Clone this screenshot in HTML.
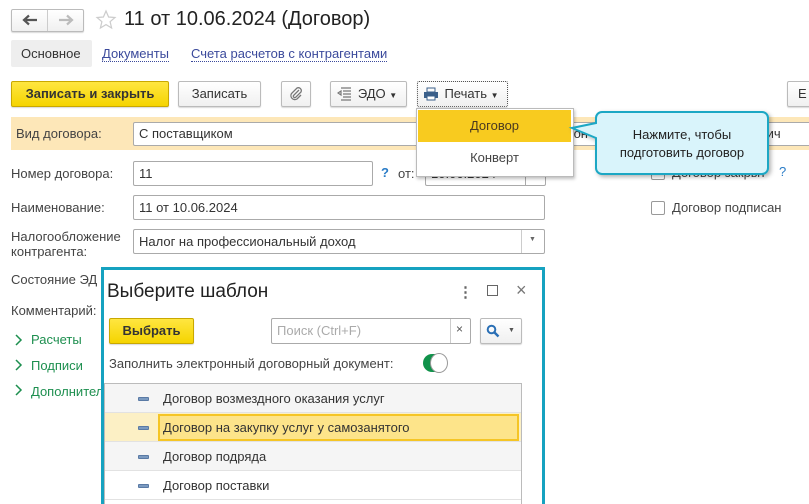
<!DOCTYPE html>
<html><head><meta charset="utf-8"><style>
*{box-sizing:border-box;margin:0;padding:0}
html{width:809px;height:504px;overflow:hidden}
body{width:809px;height:504px;overflow:hidden;background:#fff;font-family:"Liberation Sans",Arial,sans-serif;font-size:13px;color:#333;position:relative}
.a{position:absolute;white-space:nowrap}
.btn{position:absolute;border:1px solid #bbb;border-radius:2px;background:linear-gradient(#fff,#f0f0f0);box-shadow:0 1px 1px rgba(0,0,0,.15);text-align:center;color:#333}
.inp{position:absolute;border:1px solid #aaa;border-radius:2px;background:#fff;padding-left:5px;color:#333}
.lbl{position:absolute;color:#444;white-space:nowrap}
.link{color:#3b4a9c;border-bottom:1px dotted #3b4a9c}
.chk{position:absolute;width:14px;height:14px;border:1px solid #999;border-radius:2px;background:#fff}
.grn{position:absolute;color:#1d8f4f;white-space:nowrap}
.row{position:absolute;left:3px;width:416px;height:29px;border-bottom:1px solid #e2e2e2}
.row .d{position:absolute;left:33px;top:13px;width:11px;height:4px;background:#7b9ac0;border:1px solid #5a7aa5;border-radius:1px}
.row .t{position:absolute;left:58px;top:7px;color:#333;font-size:13px}
</style></head><body>

<div class="btn" style="left:11px;top:9px;width:73px;height:23px"></div>
<div class="a" style="left:47px;top:10px;width:1px;height:21px;background:#ccc"></div>
<svg class="a" style="left:22px;top:14px" width="16" height="12" viewBox="0 0 16 12"><path d="M15 6H4M7 1.5L2 6l5 4.5" fill="none" stroke="#555" stroke-width="2.2"/></svg>
<svg class="a" style="left:58px;top:14px" width="16" height="12" viewBox="0 0 16 12"><path d="M1 6h11M9 1.5L14 6l-5 4.5" fill="none" stroke="#bbb" stroke-width="2.2"/></svg>
<svg class="a" style="left:95px;top:9px" width="22" height="22" viewBox="0 0 22 22"><path d="M11 2l2.6 6 6.4.5-4.9 4.2 1.5 6.3L11 15.6 5.4 19l1.5-6.3L2 8.5 8.4 8z" fill="none" stroke="#ccc" stroke-width="1.2"/></svg>
<div class="a" style="left:124px;top:8px;font-size:20px;color:#222">11 от 10.06.2024 (Договор)</div>

<div class="a" style="left:11px;top:40px;width:81px;height:27px;background:#eee;border-radius:2px"></div>
<div class="a" style="left:21px;top:46px;color:#333">Основное</div>
<div class="a link" style="left:102px;top:46px">Документы</div>
<div class="a link" style="left:191px;top:46px">Счета расчетов с контрагентами</div>

<div class="btn" style="left:11px;top:81px;width:158px;height:26px;background:linear-gradient(#ffe640,#f5d400);border-color:#c9a800;font-weight:bold;line-height:24px;color:#333">Записать и закрыть</div>
<div class="btn" style="left:178px;top:81px;width:83px;height:26px;line-height:24px">Записать</div>
<div class="btn" style="left:281px;top:81px;width:30px;height:26px"></div>
<svg class="a" style="left:288px;top:86px" width="16" height="16" viewBox="0 0 16 16"><path d="M11 4L5.5 9.5a1.5 1.5 0 0 0 2 2L13 6a3 3 0 0 0-4-4L3.5 7.5a4 4 0 0 0 5.5 5.5L13 9" fill="none" stroke="#777" stroke-width="1.3"/></svg>
<div class="btn" style="left:330px;top:81px;width:77px;height:26px;line-height:24px;padding-left:18px">ЭДО <span style="font-size:8px">▼</span></div>
<svg class="a" style="left:337px;top:87px" width="16" height="14" viewBox="0 0 16 14"><path d="M4 1h10M6 4h8M6 7h8M6 10h8M4 13h10M1 6l3-2v4z" stroke="#777" fill="none" stroke-width="1.2"/></svg>
<div class="btn" style="left:417px;top:81px;width:91px;height:26px;line-height:24px;padding-left:18px;border:1px dotted #555">Печать <span style="font-size:8px">▼</span></div>
<svg class="a" style="left:423px;top:87px" width="16" height="14" viewBox="0 0 16 14"><rect x="4" y="1" width="8" height="4" fill="none" stroke="#3a5f8a"/><rect x="1" y="5" width="14" height="6" fill="#3a5f8a"/><rect x="4" y="9" width="8" height="4" fill="#fff" stroke="#3a5f8a"/></svg>
<div class="btn" style="left:787px;top:81px;width:30px;height:26px;line-height:24px;text-align:left;padding-left:10px">Е</div>

<div class="a" style="left:11px;top:117px;width:798px;height:33px;background:#fde7b8"></div>
<div class="lbl" style="left:16px;top:126px">Вид договора:</div>
<div class="inp" style="left:133px;top:122px;width:300px;height:24px;line-height:22px">С поставщиком</div>
<div class="inp" style="left:560px;top:122px;width:260px;height:24px;line-height:22px">Кон<span style="margin-left:150px">реевич</span></div>

<div class="lbl" style="left:11px;top:166px">Номер договора:</div>
<div class="inp" style="left:133px;top:161px;width:240px;height:25px;line-height:23px">11</div>
<div class="a" style="left:381px;top:165px;color:#2a7cc7;font-weight:bold">?</div>
<div class="lbl" style="left:398px;top:166px">от:</div>
<div class="inp" style="left:425px;top:161px;width:121px;height:25px;line-height:23px">10.06.2024</div>
<div class="a" style="left:525px;top:162px;width:1px;height:23px;background:#aaa"></div>
<div class="chk" style="left:651px;top:166px"></div>
<div class="lbl" style="left:672px;top:165px">Договор закрыт</div>
<div class="a" style="left:779px;top:164px;color:#2a7cc7">?</div>

<div class="lbl" style="left:11px;top:200px">Наименование:</div>
<div class="inp" style="left:133px;top:195px;width:412px;height:25px;line-height:23px">11 от 10.06.2024</div>
<div class="chk" style="left:651px;top:201px"></div>
<div class="lbl" style="left:672px;top:200px">Договор подписан</div>

<div class="lbl" style="left:11px;top:229px;line-height:15px">Налогообложение<br>контрагента:</div>
<div class="inp" style="left:133px;top:229px;width:412px;height:25px;line-height:23px">Налог на профессиональный доход</div>
<div class="a" style="left:521px;top:230px;width:1px;height:23px;background:#ccc"></div>
<div class="a" style="left:529px;top:236px;font-size:7px;color:#666">▼</div>

<div class="lbl" style="left:11px;top:272px">Состояние ЭД</div>
<div class="lbl" style="left:11px;top:303px">Комментарий:</div>
<svg class="a" style="left:14px;top:334px" width="10" height="66" viewBox="0 0 10 66"><path d="M2 1l5 5-5 5M2 26l5 5-5 5M2 51l5 5-5 5" fill="none" stroke="#1d8f4f" stroke-width="1.5"/></svg>
<div class="grn" style="left:31px;top:332px">Расчеты</div>
<div class="grn" style="left:31px;top:358px">Подписи</div>
<div class="grn" style="left:31px;top:384px">Дополнительно</div>

<div class="a" style="left:416px;top:108px;width:158px;height:69px;background:#fff;border:1px solid #bbb;box-shadow:1px 2px 3px rgba(0,0,0,.25)"></div>
<div class="a" style="left:418px;top:110px;width:153px;height:32px;background:#f8cb1f;text-align:center;line-height:32px;color:#4a3a20">Договор</div>
<div class="a" style="left:418px;top:144px;width:153px;height:28px;text-align:center;line-height:28px;color:#444">Конверт</div>

<svg class="a" style="left:568px;top:108px" width="210" height="74" viewBox="0 0 210 74">
<defs><filter id="s"><feDropShadow dx="2" dy="2" stdDeviation="2" flood-opacity=".3"/></filter></defs>
<path d="M34 4h160a6 6 0 0 1 6 6v50a6 6 0 0 1-6 6H34a6 6 0 0 1-6-6V30L4 20l24-5V10a6 6 0 0 1 6-6z" fill="#d9f4fb" stroke="#1aa7c4" stroke-width="2" filter="url(#s)"/>
</svg>
<div class="a" style="left:596px;top:126px;width:172px;text-align:center;font-size:13px;line-height:18px;color:#222">Нажмите, чтобы<br>подготовить договор</div>

<div class="a" style="left:101px;top:267px;width:444px;height:237px;background:#fff;border:3px solid #16a2c0;border-bottom:none"></div>
<div class="a" style="left:107px;top:281px;font-size:19px;color:#222">Выберите шаблон</div>
<div class="a" style="left:458px;top:283px;font-size:15px;color:#666;font-weight:bold">⋮</div>
<div class="a" style="left:487px;top:285px;width:11px;height:11px;border:1px solid #666"></div>
<div class="a" style="left:516px;top:280px;font-size:18px;color:#777">×</div>

<div class="btn" style="left:109px;top:318px;width:85px;height:26px;background:linear-gradient(#ffe640,#f5d400);border-color:#c9a800;font-weight:bold;line-height:24px;color:#333">Выбрать</div>
<div class="inp" style="left:271px;top:318px;width:200px;height:26px;line-height:24px;color:#aaa">Поиск (Ctrl+F)</div>
<div class="a" style="left:450px;top:319px;width:1px;height:24px;background:#ccc"></div>
<div class="a" style="left:456px;top:322px;font-size:12px;color:#555">×</div>
<div class="btn" style="left:480px;top:318px;width:42px;height:26px"></div>
<svg class="a" style="left:486px;top:324px" width="14" height="14" viewBox="0 0 14 14"><circle cx="5.5" cy="5.5" r="3.8" fill="none" stroke="#2a6fb5" stroke-width="2"/><path d="M8.5 8.5l4 4" stroke="#2a6fb5" stroke-width="2.4"/></svg>
<div class="a" style="left:508px;top:327px;font-size:7px;color:#555">▼</div>

<div class="lbl" style="left:109px;top:356px">Заполнить электронный договорный документ:</div>
<div class="a" style="left:423px;top:354px;width:24px;height:18px;border-radius:9px;background:#10924a"></div>
<div class="a" style="left:430px;top:353px;width:18px;height:20px;border-radius:50%;background:#fff;border:1px solid #999"></div>

<div class="a" style="left:104px;top:383px;width:418px;height:121px;border:1px solid #bbb;border-bottom:none"></div>
<div class="row" style="left:105px;top:384px;background:#f5f5f5"><div class="d"></div><div class="t">Договор возмездного оказания услуг</div></div>
<div class="row" style="left:105px;top:413px;background:#fcf0c5"><div class="d"></div>
<div class="a" style="left:53px;top:1px;width:361px;height:27px;border:2px solid #f5c525;background:#fde48a"></div><div class="t">Договор на закупку услуг у самозанятого</div></div>
<div class="row" style="left:105px;top:442px;background:#f5f5f5"><div class="d"></div><div class="t">Договор подряда</div></div>
<div class="row" style="left:105px;top:471px"><div class="d"></div><div class="t">Договор поставки</div></div>

</body></html>
